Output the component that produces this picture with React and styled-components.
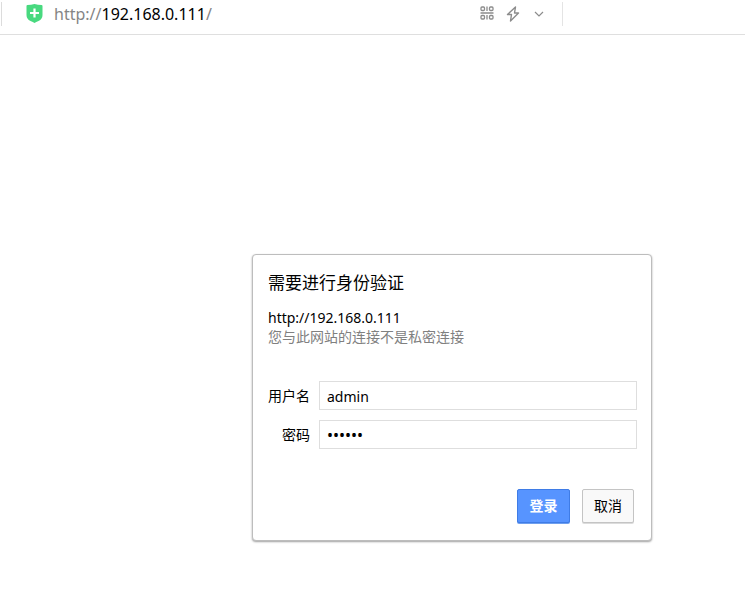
import styled, { createGlobalStyle } from "styled-components";

const GlobalStyle = createGlobalStyle`
  * {
    box-sizing: border-box;
  }

  body {
    margin: 0;
    background: #fff;
    color: #000;
    font-family: "Noto Sans", "Noto Sans CJK SC", sans-serif;
    font-size: 14px;
  }
`;

const Toolbar = styled.header`
  height: 35px;
  padding-top: 2px;
  border-bottom: 1px solid #dfdfdf;
`;

const AddressBar = styled.div`
  display: flex;
  align-items: center;
  width: 75.5%;
  height: 24px;
  margin-left: 1px;
  padding: 0 10px 0 24px;
  border-left: 1px solid #dcdcdc;
  border-right: 1px solid #e4e4e4;

  & > svg {
    flex: none;
  }
`;

const Url = styled.span`
  flex: 1;
  margin-left: 11px;
  color: #858585;
  font-size: 16px;
  line-height: 24px;

  & > b {
    color: #000;
    font-weight: 400;
  }
`;

const ToolButton = styled.button`
  display: flex;
  align-items: flex-start;
  justify-content: center;
  width: 26px;
  height: 16px;
  padding: 0;
  border: 0;
  background: none;
  color: #8c8c8c;
`;

const Page = styled.main`
  padding: 219px 93px 40px 252px;
`;

const Dialog = styled.form`
  padding: 14px 14px 17px 15px;
  border: 1px solid #bdbdbd;
  border-radius: 4px;
  background: #fff;
  box-shadow: 0 1px 2px #a0a0a0;

  & > h1 {
    margin: 0;
    font-size: 17px;
    font-weight: 400;
    line-height: 28px;
  }

  & > p {
    margin: 0;
    line-height: 20px;
  }

  & > p.origin {
    margin-top: 12px;
    line-height: 18px;
  }

  & > p.warning {
    color: #808080;
  }
`;

const Fields = styled.div`
  display: grid;
  grid-template-columns: 42px 1fr;
  align-items: center;
  gap: 10px 9px;
  margin-top: 34px;

  & > label {
    text-align: right;
    line-height: 20px;
  }
`;

const TextInput = styled.input`
  width: 100%;
  min-width: 0;
  height: 29px;
  padding: 1px 7px 0;
  border: 1px solid #dedede;
  outline: none;
  background: #fff;
  color: #000;
  font: inherit;

  &[type="password"] {
    font-size: 16px;
  }
`;

const Actions = styled.div`
  display: flex;
  justify-content: flex-end;
  gap: 12px;
  margin-top: 40px;
  padding-right: 3px;
`;

const Button = styled.button`
  width: ${({ $primary }) => ($primary ? "53px" : "52px")};
  height: 34px;
  padding: 0 0 3px;
  border: 1px solid ${({ $primary }) => ($primary ? "#3f7ce6" : "#c4c4c4")};
  border-radius: 2px;
  background: ${({ $primary }) => ($primary ? "#5794ff" : "#f9f9f9")};
  box-shadow: 0 1px 0 ${({ $primary }) => ($primary ? "#6f9fee" : "#dcdcdc")};
  color: ${({ $primary }) => ($primary ? "#fff" : "#000")};
  font: inherit;
  font-weight: ${({ $primary }) => ($primary ? 700 : 400)};
`;

const ShieldIcon = () => (
  <svg width="17" height="20" viewBox="0 0 17 20" aria-hidden="true">
    <path
      d="M1.5 1Q5 1 8.500 0Q12 1 15.500 1Q16.500 1 16.500 2V11Q16.500 15 12.500 17Q10 18.200 8.500 19Q7 18.200 4.500 17Q.5 15 .5 11V2Q.5 1 1.500 1Z"
      fill="#48d97f"
    />
    <path d="M8.500 4.500V13.500M4 9H13" stroke="#fff" strokeWidth="2.200" />
  </svg>
);

const CodeIcon = () => (
  <svg width="14" height="14" viewBox="0 0 14 14" fill="none" stroke="currentColor" strokeWidth="1.300" aria-hidden="true">
    <rect x="1" y="1" width="3.500" height="3.500" rx="1" />
    <rect x="9.500" y="1" width="3.500" height="3.500" rx="1" />
    <rect x="1" y="9.500" width="3.500" height="3.500" rx="1" />
    <rect x="9.500" y="9.500" width="3.500" height="3.500" rx="1" />
    <path d="M.5 7H13.500M7 .5V5M7 9V13.500" />
  </svg>
);

const BoltIcon = () => (
  <svg width="14" height="16" viewBox="0 0 14 16" fill="none" stroke="currentColor" aria-hidden="true">
    <path d="M9.500 1L1.500 8.500H5.500L4.500 15L12.500 7H8.500Z" strokeWidth="1.400" strokeLinejoin="round" />
  </svg>
);

const ChevronIcon = () => (
  <svg width="10" height="14" viewBox="0 0 10 14" fill="none" stroke="currentColor" aria-hidden="true">
    <path d="M1 6L5 10L9 6" strokeWidth="1.200" />
  </svg>
);

const App = () => {
  return (
    <>
      <GlobalStyle />
      <Toolbar>
        <AddressBar>
          <ShieldIcon />
          <Url>
            http://<b>192.168.0.111</b>/
          </Url>
          <ToolButton type="button" aria-label="二维码">
            <CodeIcon />
          </ToolButton>
          <ToolButton type="button" aria-label="极速模式">
            <BoltIcon />
          </ToolButton>
          <ToolButton type="button" aria-label="展开">
            <ChevronIcon />
          </ToolButton>
        </AddressBar>
      </Toolbar>
      <Page>
        <Dialog onSubmit={(e) => e.preventDefault()}>
          <h1>需要进行身份验证</h1>
          <p className="origin">http://192.168.0.111</p>
          <p className="warning">您与此网站的连接不是私密连接</p>
          <Fields>
            <label htmlFor="username">用户名</label>
            <TextInput id="username" type="text" defaultValue="admin" />
            <label htmlFor="password">密码</label>
            <TextInput id="password" type="password" defaultValue="123456" />
          </Fields>
          <Actions>
            <Button type="submit" $primary>
              登录
            </Button>
            <Button type="button">取消</Button>
          </Actions>
        </Dialog>
      </Page>
    </>
  );
};

export default App;
